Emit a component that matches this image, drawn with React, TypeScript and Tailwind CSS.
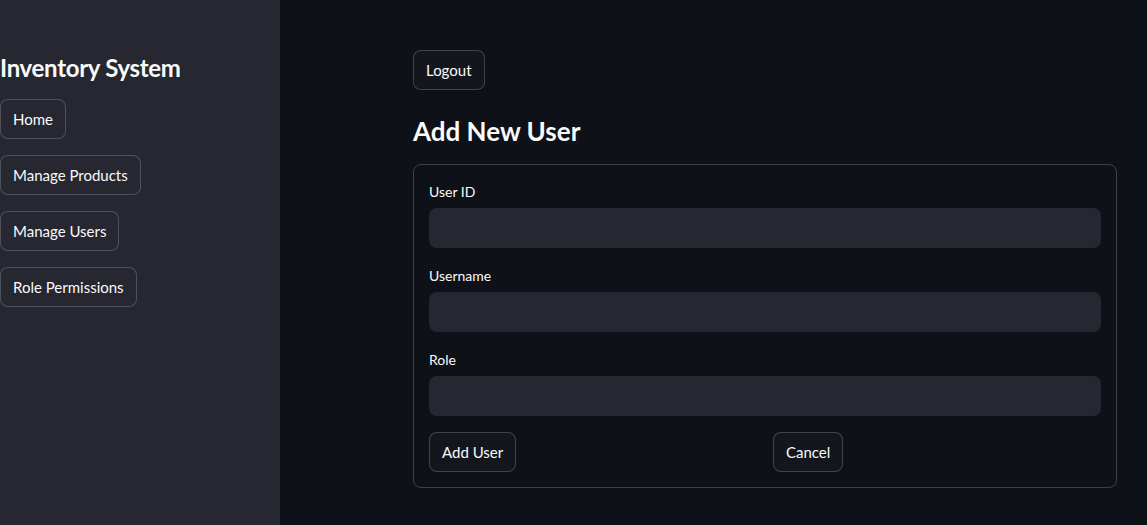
import React from "react";

const btnMain =
  "h-10 px-3 rounded-lg border border-[rgba(250,250,250,0.2)] bg-[#13161d] text-[#fafafa] text-[15px] leading-none flex items-center";
const btnSide =
  "h-10 px-3 rounded-lg border border-[rgba(250,250,250,0.2)] bg-[#262730] text-[#fafafa] text-[15px] leading-none flex items-center";

function Field({ label }: { label: string }) {
  return (
    <div className="flex flex-col">
      <div className="h-6 mb-1 flex items-center text-[14px] text-[#fafafa] -translate-y-[1px]">{label}</div>
      <div className="h-10 rounded-lg bg-[#262730]" />
    </div>
  );
}

export default function App() {
  return (
    <div
      className="flex w-[1147px] h-[525px] bg-[#0e1117] text-[#fafafa] overflow-hidden"
      style={{ fontFamily: "Lato, 'Noto Sans', sans-serif" }}
    >
      <aside className="w-[280px] shrink-0 h-full bg-[#262730] pt-[50px]">
        <div className="h-9 leading-9 text-[24px] font-bold tracking-[-0.3px]">Inventory System</div>
        <div className="mt-[13px] flex flex-col gap-4 items-start">
          <button className={btnSide}>Home</button>
          <button className={btnSide}>Manage Products</button>
          <button className={btnSide}>Manage Users</button>
          <button className={btnSide}>Role Permissions</button>
        </div>
      </aside>
      <main className="flex-1 pl-[133px] pt-[50px]">
        <div className="w-[704px]">
          <button className={btnMain}>Logout</button>
          <h2 className="mt-5 h-[42px] leading-[42px] text-[26px] font-bold">Add New User</h2>
          <div className="mt-3 rounded-lg border border-[rgba(250,250,250,0.2)] p-[15px] flex flex-col gap-4">
            <Field label="User ID" />
            <Field label="Username" />
            <Field label="Role" />
            <div className="grid grid-cols-2 gap-4">
              <div>
                <button className={btnMain}>Add User</button>
              </div>
              <div>
                <button className={btnMain}>Cancel</button>
              </div>
            </div>
          </div>
        </div>
      </main>
    </div>
  );
}
